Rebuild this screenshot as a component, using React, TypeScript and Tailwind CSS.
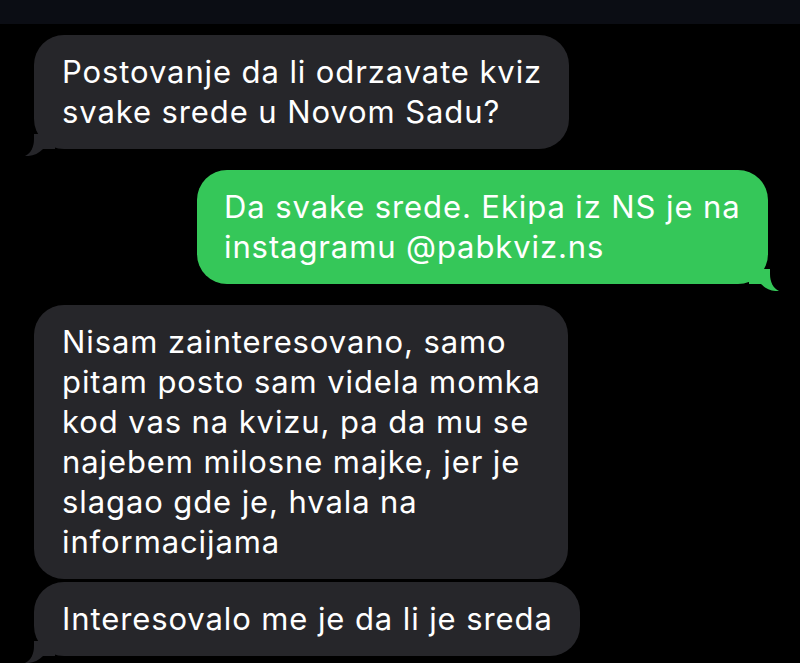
function Tail({ side, fill }: { side: "left" | "right"; fill: string }) {
  return (
    <svg
      className={
        side === "left"
          ? "absolute -left-[9px] -bottom-[7px]"
          : "absolute -right-[11px] -bottom-[7px] -scale-x-100"
      }
      width="30"
      height="22"
      viewBox="0 0 30 22"
      fill={fill}
    >
      <path d="M9 0 V5 C9 13 6 19 0 22 C7 22.5 13 20 18 15 L30 15 L30 0 Z" />
    </svg>
  );
}

function Bubble({
  children,
  className,
  tail,
  sent = false,
}: {
  children: React.ReactNode;
  className: string;
  tail?: boolean;
  sent?: boolean;
}) {
  const fill = sent ? "#35c759" : "#26262a";
  return (
    <div
      className={`relative w-fit whitespace-nowrap rounded-[30px] py-[17px] pr-[27px] text-[31px] leading-[40px] tracking-[0.9px] text-white ${
        sent ? "bg-[#35c759]" : "bg-[#26262a]"
      } ${className}`}
    >
      {children}
      {tail && <Tail side={sent ? "right" : "left"} fill={fill} />}
    </div>
  );
}

export default function App() {
  return (
    <div
      className="flex h-[663px] w-[800px] flex-col overflow-hidden bg-black"
      style={{ fontFamily: "Inter, 'Noto Sans', sans-serif" }}
    >
      {/* status bar strip */}
      <div className="h-[24px] w-full shrink-0 bg-[#0b0d14]" />

      <Bubble tail className="ml-[34px] mt-[11px] pl-[28px]">
        Postovanje da li odrzavate kviz
        <br />
        svake srede u Novom Sadu?
      </Bubble>

      <Bubble sent tail className="ml-[197px] mt-[21px] pl-[27px]">
        Da svake srede. Ekipa iz NS je na
        <br />
        instagramu @pabkviz.ns
      </Bubble>

      <Bubble className="ml-[34px] mt-[21px] pl-[28px]">
        Nisam zainteresovano, samo
        <br />
        pitam posto sam videla momka
        <br />
        kod vas na kvizu, pa da mu se
        <br />
        najebem milosne majke, jer je
        <br />
        slagao gde je, hvala na
        <br />
        informacijama
      </Bubble>

      <Bubble tail className="ml-[34px] mt-[3px] pl-[28px]">
        Interesovalo me je da li je sreda
      </Bubble>
    </div>
  );
}
